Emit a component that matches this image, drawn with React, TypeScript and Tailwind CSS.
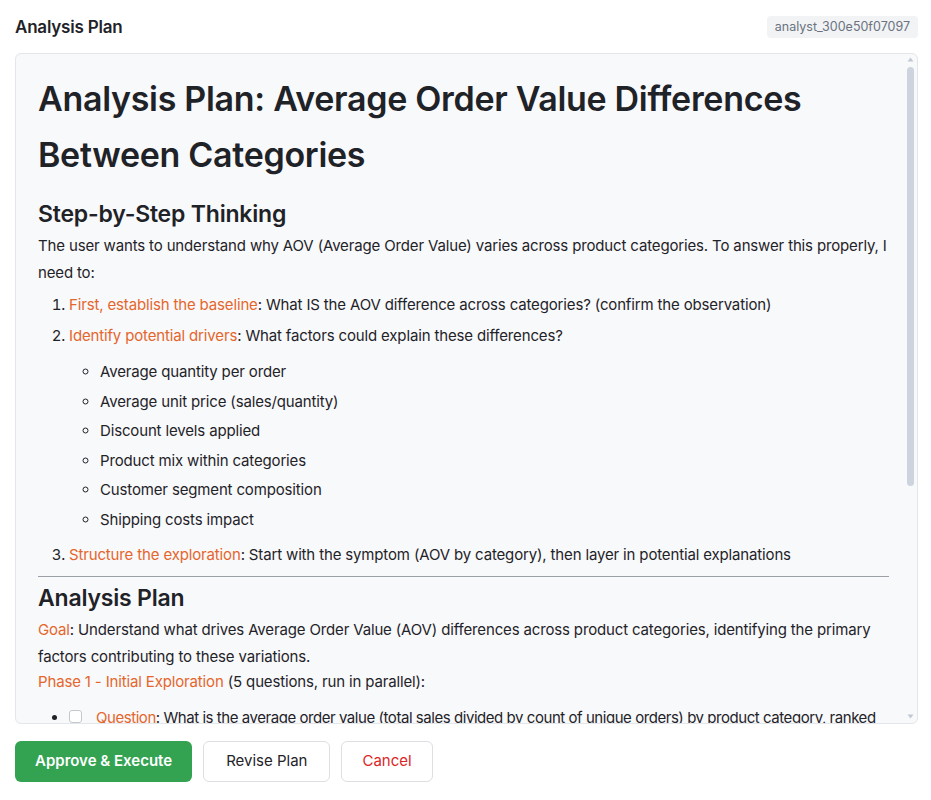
const font = { fontFamily: 'Inter, "Liberation Sans", sans-serif' };

function Hl({ children }: { children: React.ReactNode }) {
  return <span className="text-[#e5662c]">{children}</span>;
}

const drivers = [
  'Average quantity per order',
  'Average unit price (sales/quantity)',
  'Discount levels applied',
  'Product mix within categories',
  'Customer segment composition',
  'Shipping costs impact',
];

const questions = [
  'What is the average order value (total sales divided by count of unique orders) by product category, ranked from highest to lowest?',
  'What is the average quantity of items per order for each product category?',
  'What is the average unit price (sales divided by quantity) for each product category?',
  'What is the average discount rate applied to orders in each product category?',
  'How does the distribution of customer segments differ across product categories?',
];

function ScrollTrack() {
  return (
    <div className="w-[15px] shrink-0 flex flex-col items-center pt-[3px] pb-[4px] pl-[1px]">
      <svg width="7" height="5" viewBox="0 0 7 5" className="shrink-0">
        <path d="M3.5 0.5 L6.5 4.5 L0.5 4.5 Z" fill="#c2c8d0" />
      </svg>
      <div className="mt-[5px] h-[419px] w-[7px] rounded-full bg-[#cdd4de] shrink-0" />
      <div className="flex-1" />
      <svg width="7" height="5" viewBox="0 0 7 5" className="shrink-0">
        <path d="M0.5 0.5 L6.5 0.5 L3.5 4.5 Z" fill="#c2c8d0" />
      </svg>
    </div>
  );
}

export default function App() {
  return (
    <div className="h-[800px] w-full bg-white pl-[15px] pr-[13px] pt-[15px] flex flex-col text-[#1f2328]" style={font}>
      <div className="flex items-center justify-between h-[23px]">
        <h1 className="mt-[2px] text-[17px] font-semibold tracking-[-0.2px]">Analysis Plan</h1>
        <span className="rounded bg-[#f1f3f5] px-[8px] h-[22px] leading-[22px] text-[12.5px] text-[#6b7280]">analyst_300e50f07097</span>
      </div>

      <div className="mt-[15px] h-[671px] rounded-md border border-[#e3e6ea] bg-[#f8f9fb] flex overflow-hidden">
        <div className="flex-1 min-w-0 overflow-hidden pl-[22px] pr-[13px] pt-[17px] pb-6 text-[15px] leading-[27px] tracking-[-0.15px]">
          <h2 className="text-[34px] leading-[56px] font-semibold tracking-[-0.3px]">
            Analysis Plan: Average Order Value Differences Between Categories
          </h2>

          <h3 className="mt-[15px] text-[23px] leading-[32px] font-semibold tracking-[-0.2px]">Step-by-Step Thinking</h3>
          <p className="mt-[2px]">
            The user wants to understand why AOV (Average Order Value) varies across product categories. To answer this properly, I need to:
          </p>
          <ol className="list-decimal pl-[31px] mt-[5px]">
            <li>
              <Hl>First, establish the baseline</Hl>: What IS the AOV difference across categories? (confirm the observation)
            </li>
            <li className="mt-[4px]">
              <Hl>Identify potential drivers</Hl>: What factors could explain these differences?
              <ul className="list-[circle] pl-[31px] mt-[9px] mb-[8px] flex flex-col gap-[2.6px]">
                {drivers.map((d) => (
                  <li key={d}>{d}</li>
                ))}
              </ul>
            </li>
            <li>
              <Hl>Structure the exploration</Hl>: Start with the symptom (AOV by category), then layer in potential explanations
            </li>
          </ol>

          <hr className="mt-[8px] border-0 border-t border-[#9aa0a6]" />

          <h3 className="mt-[5px] text-[23px] leading-[32px] font-semibold tracking-[-0.2px]">Analysis Plan</h3>
          <p className="mt-[2px]">
            <Hl>Goal</Hl>: Understand what drives Average Order Value (AOV) differences across product categories, identifying the primary factors contributing to these variations.
          </p>
          <p className="leading-[24px]">
            <Hl>Phase 1 - Initial Exploration</Hl> (5 questions, run in parallel):
          </p>
          <ul className="list-disc pl-[31px] mt-[10px] flex flex-col gap-[4px] tracking-[-0.45px]">
            {questions.map((q) => (
              <li key={q}>
                <span className="inline-flex items-start gap-[14px]">
                  <span className="mt-[6px] h-[13px] w-[13px] shrink-0 rounded-[3px] border border-[#c4c8ce] bg-white" />
                  <span>
                    <Hl>Question</Hl>: {q}
                  </span>
                </span>
              </li>
            ))}
          </ul>
        </div>
        <ScrollTrack />
      </div>

      <div className="mt-[17px] flex gap-[11px]">
        <button className="h-[41px] px-5 rounded-md bg-[#33a352] text-white text-[15px] font-semibold">Approve &amp; Execute</button>
        <button className="h-[41px] px-[22px] rounded-md border border-[#dcdfe3] bg-white text-[15px] text-[#1f2328]">Revise Plan</button>
        <button className="h-[41px] px-[20px] rounded-md border border-[#dcdfe3] bg-white text-[15px] text-[#dc2626]">Cancel</button>
      </div>
    </div>
  );
}
